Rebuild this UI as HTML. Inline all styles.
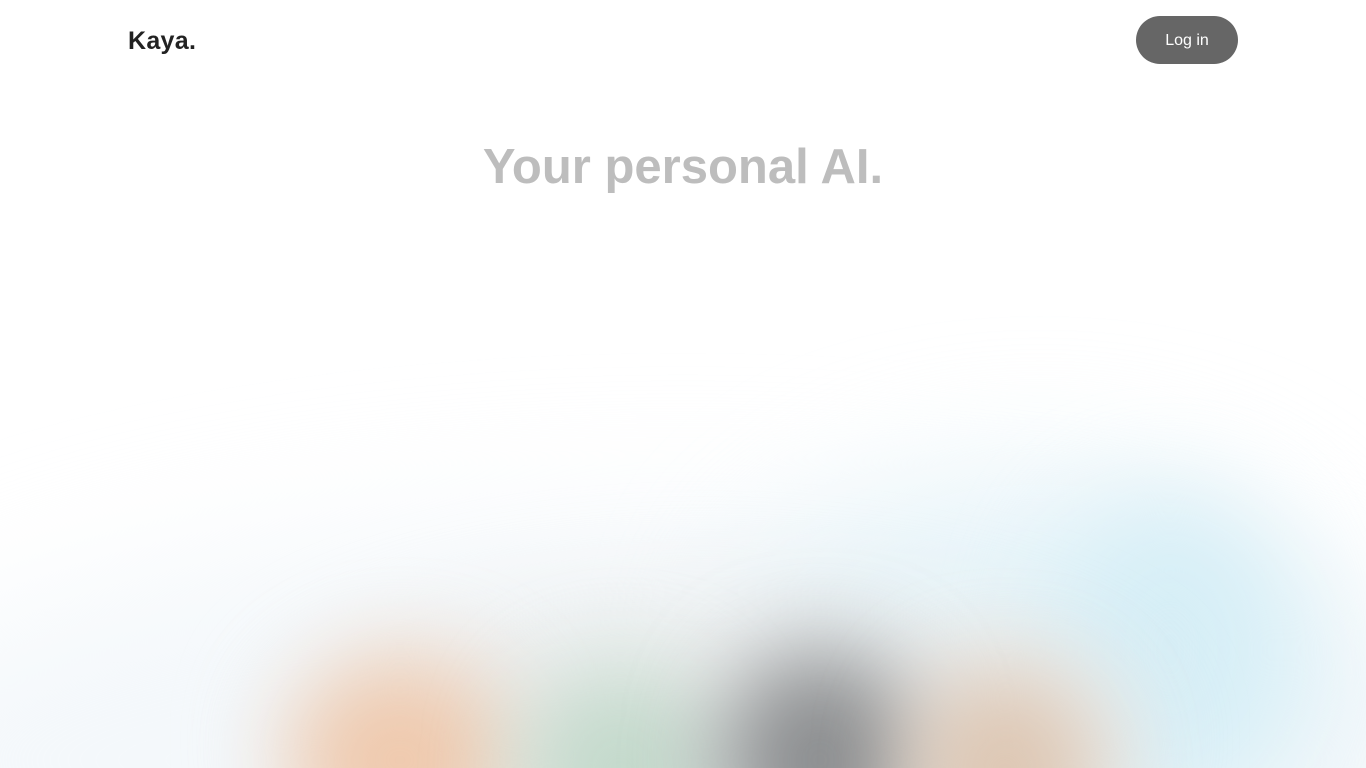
<!DOCTYPE html>
<html><head><meta charset="utf-8">
<style>
html,body{margin:0;padding:0;width:1366px;height:768px;overflow:hidden;background:#fff;font-family:"Liberation Sans",sans-serif;}
#w{position:relative;width:1366px;height:768px;overflow:hidden;background:#fff;contain:paint;}
.logo{position:absolute;left:128px;top:27px;font-size:25px;font-weight:700;color:#222;letter-spacing:0.3px;}
.btn{position:absolute;left:1136px;top:16px;width:102px;height:48px;border-radius:24px;background:#666;color:#fff;font-size:16px;line-height:50px;text-align:center;}
h1{position:absolute;top:139px;left:0;width:1366px;margin:0;text-align:center;font-size:49px;font-weight:700;color:#bdbdbd;}
.b{position:absolute;border-radius:50%;}
</style></head><body><div id="w">
<div class="b" style="left:-150px;top:520px;width:1666px;height:480px;background:#f4f8fb;filter:blur(70px);"></div>
<div class="b" style="left:740px;top:480px;width:600px;height:380px;background:#e6f4f9;filter:blur(70px);"></div>
<div class="b" style="left:1050px;top:500px;width:240px;height:300px;background:#d6eef6;filter:blur(50px);"></div>
<div class="b" style="left:280px;top:600px;width:860px;height:280px;background:#eceeee;filter:blur(50px);"></div>
<div class="b" style="left:290px;top:660px;width:220px;height:200px;background:#efc9ad;filter:blur(45px);"></div>
<div class="b" style="left:520px;top:670px;width:200px;height:200px;background:#c3d9cb;filter:blur(45px);"></div>
<div class="b" style="left:720px;top:650px;width:200px;height:220px;background:#8c8e90;filter:blur(45px);"></div>
<div class="b" style="left:910px;top:670px;width:190px;height:200px;background:#ddc6b2;filter:blur(45px);"></div>
<div class="logo">Kaya.</div>
<div class="btn">Log in</div>
<h1>Your personal AI.</h1>
</div></body></html>
